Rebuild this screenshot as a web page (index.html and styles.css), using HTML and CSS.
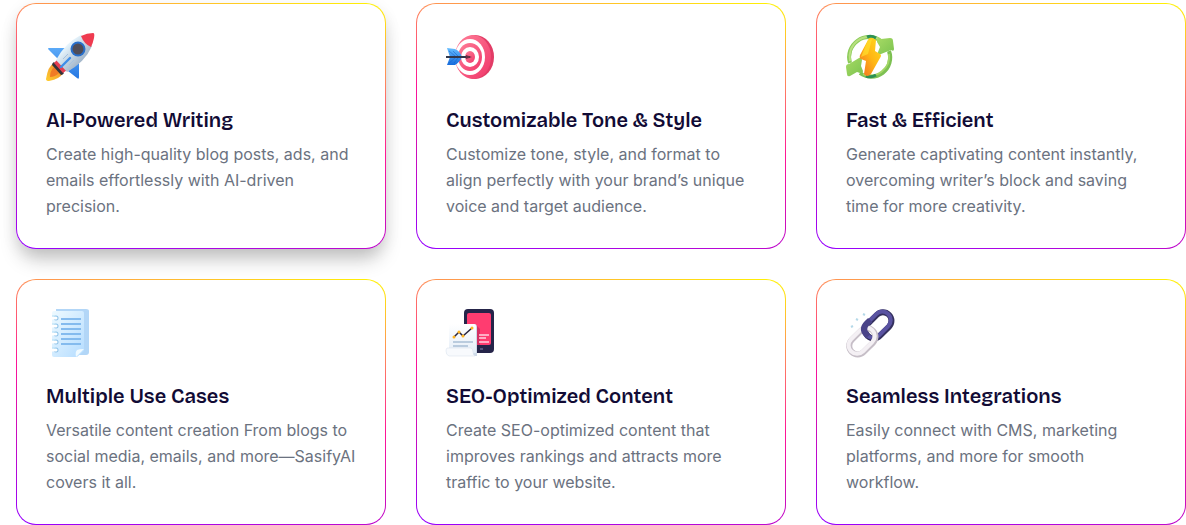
FILE: index.html
```
<!DOCTYPE html>
<html lang="en">
<head>
<meta charset="utf-8">
<meta name="viewport" content="width=device-width, initial-scale=1">
<title>Features</title>
<link rel="stylesheet" href="styles.css">
</head>
<body>
<main class="features">
  <article class="card card-raised">
    <svg class="icon" viewBox="0 0 48 48" aria-hidden="true">
      <defs>
        <linearGradient id="hull" x1="0" y1="0" x2="1" y2="1"><stop offset=".3" stop-color="#e6f4fc"/><stop offset=".7" stop-color="#a5b8cb"/></linearGradient>
        <linearGradient id="flame" x1="1" y1="0" x2="0" y2="1"><stop offset="0" stop-color="#ed8130"/><stop offset="1" stop-color="#ffcf2e"/></linearGradient>
        <linearGradient id="fin" x1="0" y1="0" x2="0" y2="1"><stop offset="0" stop-color="#5baaf8"/><stop offset="1" stop-color="#2677e2"/></linearGradient>
      </defs>
      <path fill="url(#fin)" d="M3 15Q1 15 3 17L12 26 20 15ZM22 38 31 45Q33 47 33 44V30Z"/>
      <path fill="url(#flame)" d="M8 30Q2 33 0 46Q0 48 3 48Q14 46 17 40Z"/>
      <path fill="#f07b25" d="M8 34Q4 38 4 44Q9 44 13 40Z"/>
      <path fill="#353338" d="M8 29Q6 30 6 32L15 42Q17 42 18 40Z"/>
      <path fill="#e63d50" d="M11 27 8 30 17 40 21 37Z"/>
      <path fill="url(#hull)" d="M10 27Q19 10 35 2L46 13Q39 29 21 39Z"/>
      <path fill="#ef3b50" d="M35 3Q41 0 47 0Q49 0 48 5Q47 10 45 14Q38 11 35 3Z"/>
      <circle cx="32" cy="16" r="7.500" fill="#286fcb"/>
      <circle cx="32" cy="16" r="5.500" fill="#504d57"/>
      <path d="M15 34 24 25" stroke="#3f8ee8" stroke-width="2.400" stroke-linecap="round"/>
      <path d="M17 26 22 21M23 32 28 27" stroke="#a6c2df" stroke-width="1"/>
    </svg>
    <h2 class="title">AI-Powered Writing</h2>
    <p class="text">Create high-quality blog posts, ads, and emails effortlessly with AI-driven precision.</p>
  </article>
  <article class="card">
    <svg class="icon" viewBox="0 0 48 48" aria-hidden="true">
      <defs>
        <linearGradient id="target" x1="0" y1="0" x2="1" y2="1"><stop offset="0" stop-color="#ff7f98"/><stop offset="1" stop-color="#f0376a"/></linearGradient>
        <linearGradient id="feather" x1="0" y1="0" x2="0" y2="1"><stop offset="0" stop-color="#65bdff"/><stop offset="1" stop-color="#176cdd"/></linearGradient>
      </defs>
      <ellipse cx="29" cy="24" rx="19" ry="22" fill="#e23c66"/>
      <ellipse cx="27" cy="24" rx="18" ry="22" fill="url(#target)"/>
      <ellipse cx="24" cy="24" rx="15" ry="18" fill="#fff"/>
      <ellipse cx="24" cy="24" rx="12" ry="14" fill="url(#target)"/>
      <ellipse cx="24" cy="24" rx="9" ry="10" fill="#fff"/>
      <ellipse cx="24" cy="24" rx="5" ry="6" fill="url(#target)"/>
      <path fill="url(#feather)" d="M1 15 9 16Q14 18 16 24Q13 30 9 32L1 32 4 24Z"/>
      <path d="M3 18 9 23M7 18 12 23M3 30 9 25M8 30 12 25" stroke="#185fc3" stroke-width=".5"/>
      <path d="M0 24H24" stroke="#32374a" stroke-width="2"/>
      <path d="m20 22 6 2-6 2Z" fill="#6d3145"/>
    </svg>
    <h2 class="title">Customizable Tone &amp; Style</h2>
    <p class="text">Customize tone, style, and format to align perfectly with your brand’s unique voice and target audience.</p>
  </article>
  <article class="card">
    <svg class="icon" viewBox="0 0 48 48" aria-hidden="true">
      <defs>
        <linearGradient id="leaf" x1="0" y1="0" x2="1" y2="1"><stop offset="0" stop-color="#a6da64"/><stop offset="1" stop-color="#7cc350"/></linearGradient>
        <linearGradient id="bolt" x1="1" y1="0" x2="0" y2="1"><stop offset="0" stop-color="#ffdc20"/><stop offset=".5" stop-color="#ffb514"/><stop offset="1" stop-color="#f16a26"/></linearGradient>
      </defs>
      <path d="M4 30A20 20 0 0 1 35 8" fill="none" stroke="#8bcb58" stroke-width="4"/>
      <path d="M4 28A20 20 0 0 1 33 6" fill="none" stroke="#b8e080" stroke-width="2"/>
      <path d="M43 18A19 19 0 0 1 14 40" fill="none" stroke="#7dc052" stroke-width="4"/>
      <path d="M43 21A19 19 0 0 1 17 41" fill="none" stroke="#a3d666" stroke-width="2"/>
      <path d="M21 4Q25 2 30 5M20 43Q25 45 30 42" fill="none" stroke="#2c9154" stroke-width="3"/>
      <path fill="url(#leaf)" d="M31 6Q32 4 35 6L44 5Q47 5 47 8L48 16Q48 19 45 17L35 21Q31 23 32 19L34 14 31 9Z"/>
      <path fill="url(#leaf)" d="M13 25Q16 24 16 27L15 33 17 38Q17 41 14 40L11 39 4 43Q1 44 1 41L0 34Q0 31 3 31Z"/>
      <path fill="url(#bolt)" d="M22 7Q23 4 27 5L30 7 29 18 34 21Q36 22 34 25L25 41Q21 45 18 41L20 28 15 26Q13 25 14 22Z"/>
      <path fill="#ffe02d" d="m22 7 4-1-4 15-7 3Z" opacity=".7"/>
    </svg>
    <h2 class="title">Fast &amp; Efficient</h2>
    <p class="text">Generate captivating content instantly, overcoming writer’s block and saving time for more creativity.</p>
  </article>
  <article class="card">
    <svg class="icon" viewBox="0 0 48 48" aria-hidden="true">
      <defs>
        <linearGradient id="sheet" x1="0" y1="0" x2="1" y2="1"><stop offset="0" stop-color="#eefaff"/><stop offset="1" stop-color="#b4dcff"/></linearGradient>
      </defs>
      <path fill="#b2d6f7" d="M10 0H40Q43 0 43 2V43Q43 46 40 46H10Z"/>
      <path fill="url(#sheet)" d="M8 2H36Q38 2 38 4V42L31 48H8Q6 48 6 46V4Q6 2 8 2Z"/>
      <path fill="#f0faff" d="M38 40 30 48Q29 43 31 41Q33 40 38 40Z"/>
      <path d="M15 10H35M15 15H35M15 20H35M15 25H35M15 30H35M15 35H35" stroke="#84bbee" stroke-width="2"/>
      <g fill="#8fc3e8"><circle cx="10" cy="9" r="2.500"/><circle cx="10" cy="17" r="2.500"/><circle cx="10" cy="25" r="2.500"/><circle cx="10" cy="33" r="2.500"/><circle cx="10" cy="41" r="2.500"/></g>
      <path d="M6 9h4M6 17h4M6 25h4M6 33h4M6 41h4" stroke="#fff" stroke-width="3" stroke-linecap="round"/>
      <path d="M6 7h4M6 15h4M6 23h4M6 31h4M6 39h4" stroke="#b4def5" stroke-width="1"/>
    </svg>
    <h2 class="title">Multiple Use Cases</h2>
    <p class="text">Versatile content creation From blogs to social media, emails, and more—SasifyAI covers it all.</p>
  </article>
  <article class="card">
    <svg class="icon" viewBox="0 0 48 48" aria-hidden="true">
      <defs>
        <linearGradient id="paper" x1="0" y1="0" x2="0" y2="1"><stop offset="0" stop-color="#fff"/><stop offset="1" stop-color="#e4edf7"/></linearGradient>
      </defs>
      <rect x="18" y="0" width="30" height="44" rx="4" fill="#252449"/>
      <rect x="21" y="4" width="24" height="32" rx="2" fill="#ff3c70"/>
      <path fill="#d52f62" d="M29 15 34 20V36H29Z"/>
      <path d="M33 26H43M33 29H40M33 33H43" stroke="#ffd2df" stroke-width="1.500"/>
      <path d="M34 40H37" stroke="#56557e" stroke-width="2"/>
      <path fill="#cedae8" d="M4 15H28Q31 15 31 18V47H4Z"/>
      <path fill="url(#paper)" d="M3 15H28Q30 15 30 17V44H3Z"/>
      <path d="m8 28 5-5 4 4 9-8" fill="none" stroke="#28243c" stroke-width="1.500"/>
      <g fill="#ffb321"><circle cx="8" cy="28" r="1.500"/><circle cx="13" cy="23" r="1.500"/><circle cx="17" cy="27" r="1.500"/><circle cx="26" cy="19" r="1.500"/></g>
      <path d="M7 33H27M7 37H22" stroke="#a9bed5" stroke-width="1.500"/>
      <path fill="#f8fafd" stroke="#d5dfeb" stroke-width=".5" d="M1 39H25Q27 40 27 43Q27 46 29 47H3Q0 46 0 42Q0 40 1 39Z"/>
    </svg>
    <h2 class="title">SEO-Optimized Content</h2>
    <p class="text">Create SEO-optimized content that improves rankings and attracts more traffic to your website.</p>
  </article>
  <article class="card">
    <svg class="icon" viewBox="0 0 48 48" aria-hidden="true">
      <g fill="none">
        <g transform="rotate(-45 32 16)">
          <rect x="17" y="8" width="30" height="17" rx="8.500" stroke="#35315f" stroke-width="6"/>
          <rect x="17" y="7" width="30" height="17" rx="8.500" stroke="#5a53a2" stroke-width="4"/>
        </g>
        <g transform="rotate(-45 16 32)">
          <rect x="1" y="24" width="30" height="17" rx="8.500" stroke="#c6bec7" stroke-width="6"/>
          <rect x="1" y="23" width="30" height="17" rx="8.500" stroke="#f4f0f4" stroke-width="4"/>
        </g>
        <g transform="rotate(-45 32 16)">
          <path d="M17 17V15.500Q17 7 25.500 7H30" stroke="#4a4388" stroke-width="6"/>
        </g>
      </g>
      <path d="m5 18 2-1M10 10l2 1M17 5l2 1" stroke="#b4d8e8" stroke-width="2"/>
    </svg>
    <h2 class="title">Seamless Integrations</h2>
    <p class="text">Easily connect with CMS, marketing platforms, and more for smooth workflow.</p>
  </article>
</main>
</body>
</html>
```
FILE: styles.css
```
* { box-sizing: border-box; }
body { margin: 0; background: #fff; }
.features {
  display: grid;
  grid-template-columns: repeat(3, minmax(0, 1fr));
  gap: 30px;
  padding: 3px 0 0 16px;
}
.card {
  padding: 29px;
  border: 1px solid transparent;
  border-radius: 20px;
  background:
    linear-gradient(#fff, #fff) padding-box,
    linear-gradient(11deg, #9500ff, #c80cc0 28%, #ff1595 52%, #ff8a5a 76%, #fff500) border-box;
}
.card-raised {
  box-shadow:
    0 14px 20px -4px rgba(0, 0, 0, .22),
    0 4px 16px rgba(0, 0, 0, .08);
}
.icon { display: block; width: 48px; height: 48px; overflow: visible; }
.title {
  margin: 24px 0 6px;
  color: #110b35;
  font: 600 20px/30px "Bricolage Grotesque", Inter, sans-serif;
}
.text {
  margin: 0;
  color: #6b7280;
  font: 400 16px/26px Inter, sans-serif;
}
```
